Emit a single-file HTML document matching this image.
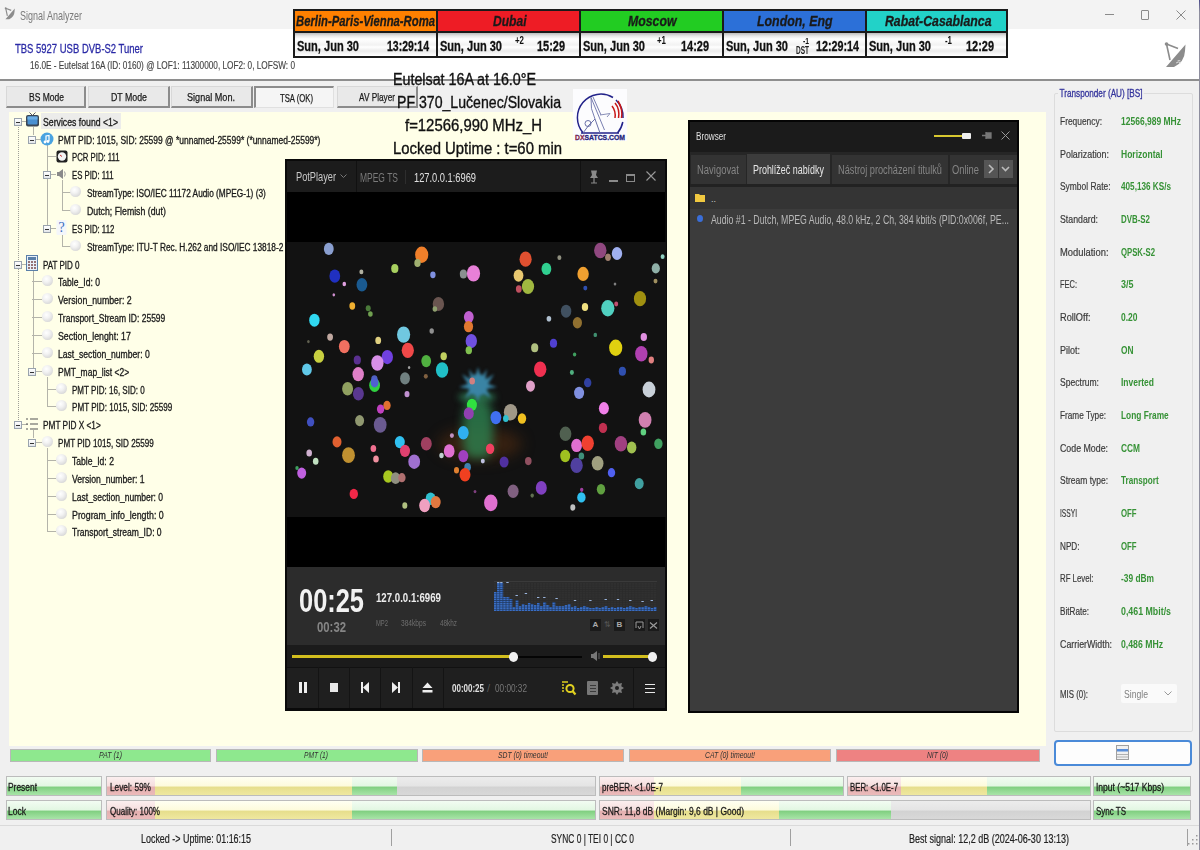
<!DOCTYPE html>
<html><head><meta charset="utf-8">
<style>
*{box-sizing:border-box;margin:0;padding:0}
html,body{width:1200px;height:850px;overflow:hidden;background:#f0f0f0;font-family:"Liberation Sans",sans-serif;position:relative}
.a{position:absolute;white-space:nowrap}
.f{position:absolute;white-space:nowrap;transform-origin:0 0}
.clk{position:absolute;top:9px;height:49px;background:#1a1a1a}
.ch{position:absolute;left:2px;right:0;top:2px;height:20px}
.ct{position:absolute;left:2px;right:0;top:24px;height:23px;background:linear-gradient(#bdbdbd 0,#e8e8e8 3px,#fff 6px,#f2f2f2 12px,#fff 14px,#eaeaea 18px,#fff 23px)}
.ctx{font:bold 14px "Liberation Sans",sans-serif;color:#111;margin-top:1px;-webkit-text-stroke:0.3px #111}
.chx{font:italic bold 15px "Liberation Sans",sans-serif;color:#1a1a1a;-webkit-text-stroke:0.3px #1a1a1a}
.tab{position:absolute;top:86px;height:22px;background:#e9e9e9;border-top:1px solid #d8d8d8;border-left:1px solid #d8d8d8;border-bottom:2px solid #8c8c8c;border-right:2px solid #8c8c8c}
.tt{font-size:11px;color:#1a1a1a;-webkit-text-stroke:0.25px #1a1a1a}
.tr{font-size:10px;color:#1a1a1a;-webkit-text-stroke:0.3px #1a1a1a}
.sph{position:absolute;width:11px;height:11px;border-radius:50%;background:radial-gradient(circle at 40% 35%,#fff 0,#f2f2f2 35%,#c9c9c9 100%)}
.bx{position:absolute;width:8px;height:8px;border:1px solid #9aa3ad;background:linear-gradient(#fff,#e3e6ea)}
.bx:after{content:"";position:absolute;left:1px;top:3px;width:4px;height:1px;background:#333}
.vl{position:absolute;width:1px;background:#b4b4aa}
.hl{position:absolute;height:1px;background:#b4b4aa}
.lab{font-size:11px;color:#3a3a3a;-webkit-text-stroke:0.2px #3a3a3a}
.val{font-weight:bold;font-size:11px;color:#369236}
.sb{position:absolute;top:749px;height:13px;border:1px solid #b8b8b8}
.sbt{font:italic 9px "Liberation Sans",sans-serif;color:#333}
.pb{position:absolute;height:20px;border:1px solid #bcbcbc;background:#e6e6e6;overflow:hidden}
.pb i{position:absolute;top:0;bottom:0}
.pbt{font-size:11px;color:#1a1a1a;-webkit-text-stroke:0.3px #1a1a1a}
.g{background:linear-gradient(#f2fcf2 0,#e2f7e2 50%,#80cf80 56%,#98dc98 82%,#a8e4a8 100%)}
.y{background:linear-gradient(#fffff2 0,#fdfbdc 50%,#e6de8c 56%,#efe8a0 100%)}
.r{background:linear-gradient(#fbefef 0,#f6dede 50%,#e4b0b0 56%,#ebbaba 100%)}
.gr{background:linear-gradient(#ececec 0,#e4e4e4 50%,#d2d2d2 56%,#d8d8d8 100%)}
.dot{position:absolute;border-radius:50%}
</style></head><body>
<!-- title bar -->
<div class="a" style="left:0;top:0;width:1200px;height:29px;background:#f3f3f3"></div>
<svg class="a" style="left:4px;top:6px" width="12" height="15" viewBox="0 0 25 28"><circle cx="3.5" cy="3" r="2" fill="#8c8c8c"></circle><path d="M3.5 3 L15 7.5 M3.5 3 L7 19" stroke="#8c8c8c" stroke-width="2.4" fill="none"></path><path d="M22.5 3.5 L3 26 L11 26 Q21.5 21 22 10 Z" fill="#8c8c8c"></path></svg>
<div class="f" style="left: 20px; top: 8px; font-size: 13px; color: rgb(122, 122, 122); transform: scaleX(0.691771);">Signal Analyzer</div>
<div class="a" style="left:1105px;top:14px;width:9px;height:1px;background:#8a8a8a"></div>
<div class="a" style="left:1141px;top:10px;width:8px;height:10px;border:1px solid #8a8a8a;border-radius:1px"></div>
<svg class="a" style="left:1176px;top:10px" width="10" height="10" viewBox="0 0 10 10"><path d="M0.5 0.5 L9.5 9.5 M9.5 0.5 L0.5 9.5" stroke="#8a8a8a" stroke-width="1"></path></svg>
<!-- header -->
<div class="a" style="left:0;top:29px;width:1200px;height:50px;background:#fff"></div>
<div class="a" style="left:0;top:79px;width:1200px;height:2px;background:#8e8e8e"></div>
<div class="f" style="left: 15px; top: 41px; font-size: 13px; color: rgb(42, 42, 166); -webkit-text-stroke: 0.3px rgb(42, 42, 166); transform: scaleX(0.728955);">TBS 5927 USB DVB-S2 Tuner</div>
<div class="f" style="left: 30px; top: 59px; font-size: 11px; color: rgb(68, 68, 68); -webkit-text-stroke: 0.15px rgb(68, 68, 68); transform: scaleX(0.747762);">16.0E - Eutelsat 16A (ID: 0160) @ LOF1: 11300000, LOF2: 0, LOFSW: 0</div>
<!-- sat icon right -->
<svg class="a" style="left:1163px;top:41px" width="25" height="28" viewBox="0 0 25 28"><circle cx="3.5" cy="3" r="1.8" fill="#8c8c8c"></circle><path d="M3.5 3 L15 7.5 M3.5 3 L7 19" stroke="#8c8c8c" stroke-width="1.6" fill="none"></path><path d="M22.5 3.5 L3 26 L11 26 Q21.5 21 22 10 Z" fill="#8c8c8c"></path><path d="M13 22 q2.5 -2 5 0 M14.5 20 q1.5 -1 3 0" stroke="#dcdcdc" stroke-width="0.9" fill="none"></path></svg>
<!-- clocks -->
<div class="clk" style="left:293px;width:145px">
 <div class="ch" style="background:#ff8000"><div class="f chx" style="left: 1px; top: 1px; transform: scaleX(0.753388);">Berlin-Paris-Vienna-Roma</div></div>
 <div class="ct"><div class="f ctx" style="left: 2px; top: 4px; transform: scaleX(0.789024);">Sun, Jun 30</div><div class="f ctx" style="left: 92px; top: 4px; transform: scaleX(0.749373);">13:29:14</div></div>
</div>
<div class="clk" style="left:436px;width:145px">
 <div class="ch" style="background:#ee1c25"><div class="f chx" style="left: 54.5px; top: 1px; transform: scaleX(0.8039);">Dubai</div></div>
 <div class="ct"><div class="f ctx" style="left: 2px; top: 4px; transform: scaleX(0.789024);">Sun, Jun 30</div><div class="f" style="left: 77px; top: 2px; font: bold 10px &quot;Liberation Sans&quot;; color: rgb(17, 17, 17); transform: scaleX(0.789041);">+2</div><div class="f ctx" style="left: 99px; top: 4px; transform: scaleX(0.78185);">15:29</div></div>
</div>
<div class="clk" style="left:579px;width:145px">
 <div class="ch" style="background:#22cc22"><div class="f chx" style="left: 46.5px; top: 1px; transform: scaleX(0.81943);">Moscow</div></div>
 <div class="ct"><div class="f ctx" style="left: 2px; top: 4px; transform: scaleX(0.789024);">Sun, Jun 30</div><div class="f" style="left: 76px; top: 2px; font: bold 10px &quot;Liberation Sans&quot;; color: rgb(17, 17, 17); transform: scaleX(0.789041);">+1</div><div class="f ctx" style="left: 100px; top: 4px; transform: scaleX(0.78185);">14:29</div></div>
</div>
<div class="clk" style="left:722px;width:145px">
 <div class="ch" style="background:#2c70d8"><div class="f chx" style="left: 33px; top: 1px; transform: scaleX(0.82387);">London, Eng</div></div>
 <div class="ct"><div class="f ctx" style="left: 2px; top: 4px; transform: scaleX(0.789024);">Sun, Jun 30</div><div class="f" style="left: 79px; top: 3px; font: bold 9px &quot;Liberation Sans&quot;; color: rgb(17, 17, 17); transform: scaleX(0.748538);">-1</div><div class="f" style="left: 72px; top: 12px; font: bold 10px &quot;Liberation Sans&quot;; color: rgb(34, 34, 34); transform: scaleX(0.65);">DST</div><div class="f ctx" style="left: 92px; top: 4px; transform: scaleX(0.767215);">12:29:14</div></div>
</div>
<div class="clk" style="left:865px;width:143px">
 <div class="ch" style="background:#22d2c8;right:2px"><div class="f chx" style="left: 17.5px; top: 1px; transform: scaleX(0.818837);">Rabat-Casablanca</div></div>
 <div class="ct" style="right:2px"><div class="f ctx" style="left: 2px; top: 4px; transform: scaleX(0.789024);">Sun, Jun 30</div><div class="f" style="left: 78px; top: 2px; font: bold 10px &quot;Liberation Sans&quot;; color: rgb(17, 17, 17); transform: scaleX(0.785965);">-1</div><div class="f ctx" style="left: 99px; top: 4px; transform: scaleX(0.78185);">12:29</div></div>
</div>

<!-- tabs -->
<div class="tab" style="left:6px;width:80px"></div>
<div class="tab" style="left:88px;width:82px"></div>
<div class="tab" style="left:171px;width:82px"></div>
<div class="a" style="left:254px;top:86px;width:80px;height:22px;background:#f5f5f5;border-top:2px solid #8c8c8c;border-left:2px solid #8c8c8c;border-right:1px solid #e0e0e0;border-bottom:1px solid #e0e0e0"></div>
<div class="tab" style="left:337px;width:81px"></div>
<div class="f tt" style="left: 29px; top: 91px; transform: scaleX(0.773481);">BS Mode</div>
<div class="f tt" style="left: 111px; top: 91px; transform: scaleX(0.799168);">DT Mode</div>
<div class="f tt" style="left: 187px; top: 91px; transform: scaleX(0.826251);">Signal Mon.</div>
<div class="f tt" style="left: 280px; top: 92px; transform: scaleX(0.701195);">TSA (OK)</div>
<div class="f tt" style="left: 359px; top: 91px; transform: scaleX(0.748538);">AV Player</div>

<!-- yellow tree panel -->
<div class="a" style="left:9px;top:112px;width:1037px;height:634px;background:#ffffe8"></div>
<div class="a" style="left:41px;top:113px;width:80px;height:16px;background:#ececea"></div>
<div class="a" style="left:18px;top:127px;width:1px;height:297px;background:repeating-linear-gradient(#a0a098 0 1px,transparent 1px 2px)"></div>
<div class="vl" style="left:33px;top:127px;height:8px"></div>
<div class="vl" style="left:47px;top:145px;height:83px"></div>
<div class="vl" style="left:62px;top:180px;height:30px"></div>
<div class="vl" style="left:62px;top:234px;height:12px"></div>
<div class="vl" style="left:33px;top:270px;height:101px"></div>
<div class="vl" style="left:47px;top:377px;height:29px"></div>
<div class="vl" style="left:33px;top:430px;height:8px"></div>
<div class="vl" style="left:47px;top:448px;height:83px"></div>
<div class="bx" style="left:14px;top:118px"></div>
<div class="hl" style="left:22px;top:121px;width:6px"></div>
<svg class="a" style="left:26px;top:112px" width="13" height="15" viewBox="0 0 13 15"><path d="M3.5 0.5 L6.5 3.5 L9.5 0.5" stroke="#556" stroke-width="1" fill="none"></path><rect x="0" y="3" width="13" height="11.5" rx="2" fill="#3b4654"></rect><rect x="1.5" y="4.5" width="10" height="8" rx="1" fill="#4a90d0"></rect><rect x="1.5" y="4.5" width="10" height="3" fill="#6aaee6"></rect></svg>
<div class="f tr" style="left: 43px; top: 116.5px; transform: scaleX(0.870354);">Services found &lt;1&gt;</div>
<div class="bx" style="left:28px;top:136px"></div>
<div class="hl" style="left:36px;top:139px;width:6px"></div>
<svg class="a" style="left:40px;top:132px" width="14" height="14" viewBox="0 0 14 14"><circle cx="7" cy="7" r="6.5" fill="#4aa3e0"></circle><path d="M6 10 V4 L9 3.5 V9" stroke="#fff" stroke-width="1.2" fill="none"></path><circle cx="5" cy="10" r="1.4" fill="#fff"></circle><circle cx="8" cy="9.5" r="1.4" fill="#fff"></circle></svg>
<div class="f tr" style="left: 57.5px; top: 134.5px; transform: scaleX(0.846025);">PMT PID: 1015, SID: 25599 @ *unnamed-25599* (*unnamed-25599*)</div>
<div class="hl" style="left:47px;top:156px;width:9px"></div>
<svg class="a" style="left:56px;top:150px" width="12" height="13" viewBox="0 0 12 13"><rect x="0.5" y="0.5" width="11" height="12" rx="2" fill="#222"></rect><circle cx="6" cy="6.5" r="4.2" fill="#f4f4f4"></circle><path d="M6 6.5 L4 5" stroke="#c33" stroke-width="1"></path></svg>
<div class="f tr" style="left: 72px; top: 151.5px; transform: scaleX(0.776153);">PCR PID: 111</div>
<div class="bx" style="left:43px;top:171px"></div>
<div class="hl" style="left:51px;top:174px;width:5px"></div>
<svg class="a" style="left:56px;top:168px" width="11" height="12" viewBox="0 0 11 12"><path d="M1 4 H3 L7 1 V11 L3 8 H1 Z" fill="#8a8a8a"></path><path d="M8.5 3.5 q1.5 2.5 0 5" stroke="#9a9a9a" stroke-width="1" fill="none"></path></svg>
<div class="f tr" style="left: 72px; top: 169.5px; transform: scaleX(0.776889);">ES PID: 111</div>
<div class="hl" style="left:62px;top:192px;width:9px"></div>
<div class="sph" style="left:70px;top:186px"></div>
<div class="f tr" style="left: 86.5px; top: 187.5px; transform: scaleX(0.828437);">StreamType: ISO/IEC 11172 Audio (MPEG-1) (3)</div>
<div class="hl" style="left:62px;top:210px;width:9px"></div>
<div class="sph" style="left:70px;top:204px"></div>
<div class="f tr" style="left: 86.5px; top: 205.5px; transform: scaleX(0.875252);">Dutch; Flemish (dut)</div>
<div class="bx" style="left:43px;top:225px"></div>
<div class="hl" style="left:51px;top:228px;width:5px"></div>
<svg class="a" style="left:56px;top:219px" width="11" height="17" viewBox="0 0 11 17"><rect x="0.5" y="1" width="10" height="15" rx="1" fill="#f4f6fa"></rect><text x="5.5" y="13" font-size="14" font-family="Liberation Serif" text-anchor="middle" fill="#3a6cc0">?</text></svg>
<div class="f tr" style="left: 72px; top: 223.5px; transform: scaleX(0.77905);">ES PID: 112</div>
<div class="hl" style="left:62px;top:246px;width:9px"></div>
<div class="sph" style="left:70px;top:240px"></div>
<div class="f tr" style="left: 86.5px; top: 241.5px; transform: scaleX(0.831975);">StreamType: ITU-T Rec. H.262 and ISO/IEC 13818-2 t</div>
<div class="bx" style="left:14px;top:261px"></div>
<div class="hl" style="left:22px;top:264px;width:6px"></div>
<svg class="a" style="left:26px;top:255px" width="12" height="16" viewBox="0 0 12 16"><rect x="0.5" y="0.5" width="11" height="15" fill="#e8f0f8" stroke="#5a7fa8"></rect><rect x="2" y="2" width="8" height="3" fill="#5a7fa8"></rect><path d="M2 7h2M5 7h2M8 7h2M2 10h2M5 10h2M8 10h2M2 13h2M5 13h2M8 13h2" stroke="#7a4a4a" stroke-width="1.5"></path></svg>
<div class="f tr" style="left: 43px; top: 259.5px; transform: scaleX(0.800823);">PAT PID 0</div>
<div class="hl" style="left:32px;top:281px;width:10px"></div>
<div class="sph" style="left:42px;top:275px"></div>
<div class="f tr" style="left: 57.5px; top: 276.5px; transform: scaleX(0.858238);">Table_Id: 0</div>
<div class="hl" style="left:32px;top:299px;width:10px"></div>
<div class="sph" style="left:42px;top:293px"></div>
<div class="f tr" style="left: 57.5px; top: 294.5px; transform: scaleX(0.877871);">Version_number: 2</div>
<div class="hl" style="left:32px;top:317px;width:10px"></div>
<div class="sph" style="left:42px;top:311px"></div>
<div class="f tr" style="left: 57.5px; top: 312.5px; transform: scaleX(0.849165);">Transport_Stream ID: 25599</div>
<div class="hl" style="left:32px;top:335px;width:10px"></div>
<div class="sph" style="left:42px;top:329px"></div>
<div class="f tr" style="left: 57.5px; top: 330.5px; transform: scaleX(0.878763);">Section_lenght: 17</div>
<div class="hl" style="left:32px;top:353px;width:10px"></div>
<div class="sph" style="left:42px;top:347px"></div>
<div class="f tr" style="left: 57.5px; top: 348.5px; transform: scaleX(0.859142);">Last_section_number: 0</div>
<div class="bx" style="left:28px;top:368px"></div>
<div class="hl" style="left:36px;top:371px;width:6px"></div>
<div class="sph" style="left:42px;top:365px"></div>
<div class="f tr" style="left: 57.5px; top: 366.5px; transform: scaleX(0.84825);">PMT_map_list &lt;2&gt;</div>
<div class="hl" style="left:47px;top:389px;width:9px"></div>
<div class="sph" style="left:56px;top:383px"></div>
<div class="f tr" style="left: 72px; top: 384.5px; transform: scaleX(0.804148);">PMT PID: 16, SID: 0</div>
<div class="hl" style="left:47px;top:406px;width:9px"></div>
<div class="sph" style="left:56px;top:400px"></div>
<div class="f tr" style="left: 72px; top: 401.5px; transform: scaleX(0.8103);">PMT PID: 1015, SID: 25599</div>
<div class="bx" style="left:14px;top:421px"></div>
<div class="hl" style="left:22px;top:424px;width:6px"></div>
<svg class="a" style="left:26px;top:417px" width="12" height="14" viewBox="0 0 12 14"><path d="M0 2h2M4 2h8M0 7h2M4 7h8M0 12h2M4 12h8" stroke="#555" stroke-width="1.2"></path></svg>
<div class="f tr" style="left: 43px; top: 419.5px; transform: scaleX(0.827562);">PMT PID X &lt;1&gt;</div>
<div class="bx" style="left:28px;top:439px"></div>
<div class="hl" style="left:36px;top:442px;width:6px"></div>
<div class="sph" style="left:42px;top:436px"></div>
<div class="f tr" style="left: 57.5px; top: 437.5px; transform: scaleX(0.809516);">PMT PID 1015, SID 25599</div>
<div class="hl" style="left:47px;top:460px;width:9px"></div>
<div class="sph" style="left:56px;top:454px"></div>
<div class="f tr" style="left: 72px; top: 455.5px; transform: scaleX(0.856194);">Table_Id: 2</div>
<div class="hl" style="left:47px;top:478px;width:9px"></div>
<div class="sph" style="left:56px;top:472px"></div>
<div class="f tr" style="left: 72px; top: 473.5px; transform: scaleX(0.865959);">Version_number: 1</div>
<div class="hl" style="left:47px;top:496px;width:9px"></div>
<div class="sph" style="left:56px;top:490px"></div>
<div class="f tr" style="left: 72px; top: 491.5px; transform: scaleX(0.853521);">Last_section_number: 0</div>
<div class="hl" style="left:47px;top:514px;width:9px"></div>
<div class="sph" style="left:56px;top:508px"></div>
<div class="f tr" style="left: 72px; top: 509.5px; transform: scaleX(0.881996);">Program_info_length: 0</div>
<div class="hl" style="left:47px;top:531px;width:9px"></div>
<div class="sph" style="left:56px;top:525px"></div>
<div class="f tr" style="left: 72px; top: 526.5px; transform: scaleX(0.851433);">Transport_stream_ID: 0</div>

<!-- potplayer window -->
<div class="a" style="left:285px;top:159px;width:382px;height:552px;background:#0a0a0a"></div>
<div class="a" style="left:287px;top:161px;width:378px;height:31px;background:#1c1c1c"></div>
<div class="a" style="left:356px;top:161px;width:1px;height:31px;background:#111"></div>
<div class="a" style="left:405px;top:170px;width:1px;height:14px;background:#2e2e2e"></div>
<div class="a" style="left:580px;top:161px;width:1px;height:31px;background:#111"></div>
<div class="f" style="left: 296px; top: 170px; font-size: 12px; color: rgb(200, 200, 200); transform: scaleX(0.768769);">PotPlayer</div>
<svg class="a" style="left:340px;top:174px" width="7" height="5" viewBox="0 0 7 5"><path d="M0.5 0.5 L3.5 3.5 L6.5 0.5" stroke="#777" fill="none"></path></svg>
<div class="f" style="left: 360px; top: 171px; font-size: 12px; color: rgb(122, 122, 122); transform: scaleX(0.706361);">MPEG TS</div>
<div class="f" style="left: 414px; top: 171px; font-size: 12px; color: rgb(224, 224, 224); transform: scaleX(0.774244);">127.0.0.1:6969</div>
<svg class="a" style="left:589px;top:170px" width="10" height="14" viewBox="0 0 10 14"><path d="M2 0.5 H8 L7 5 L9 8 H1 L3 5 Z" fill="#8a8a8a"></path><path d="M5 8 V13 M2 13 H8" stroke="#8a8a8a" stroke-width="1.2"></path></svg>
<div class="a" style="left:609px;top:180px;width:9px;height:2px;background:#8a8a8a"></div>
<div class="a" style="left:626px;top:174px;width:9px;height:8px;border:1px solid #8a8a8a;border-top-width:2px"></div>
<svg class="a" style="left:646px;top:171px" width="10" height="10" viewBox="0 0 10 10"><path d="M0.5 0.5 L9.5 9.5 M9.5 0.5 L0.5 9.5" stroke="#9a9a9a" stroke-width="1.1"></path></svg>
<div class="a" style="left:287px;top:192px;width:378px;height:50px;background:#000"></div>
<div class="a" style="left:287px;top:242px;width:379px;height:275px;background:#121212"></div>
<!-- tree glow -->
<div class="a" style="left:438px;top:428px;width:84px;height:32px;border-radius:50%;background:rgba(110,55,15,0.4);filter:blur(7px)"></div>
<div class="a" style="left:463px;top:398px;width:30px;height:60px;border-radius:40% 40% 30% 30%;background:rgba(45,130,80,0.8);filter:blur(5px)"></div>
<div class="a" style="left:458px;top:392px;width:38px;height:10px;border-radius:50%;background:rgba(50,140,95,0.7);filter:blur(3px)"></div>
<svg class="a" style="left:455px;top:364px;filter:blur(1.6px)" width="46" height="40" viewBox="0 0 46 40"><g fill="#3a84a4"><ellipse cx="23" cy="21" rx="10" ry="11"></ellipse><path d="M23 3 L26 14 L32 5 L30 16 L39 10 L33 20 L42 23 L31 25 L36 34 L25 28 L23 38 L20 28 L10 34 L15 25 L4 23 L13 20 L7 10 L16 16 L14 5 L20 14 Z"></path></g></svg>
<svg class="a" style="left:0;top:0" width="1200" height="850" viewBox="0 0 1200 850">
<ellipse cx="328.8" cy="248.9" rx="4.9" ry="6.1" fill="#8a9fd0"></ellipse>
<ellipse cx="421.7" cy="254.7" rx="6.6" ry="8.2" fill="#f07f2a"></ellipse>
<ellipse cx="417.5" cy="263" rx="3.2" ry="4.0" fill="#a0b070"></ellipse>
<ellipse cx="394.8" cy="268.4" rx="3.6" ry="4.5" fill="#a8d060"></ellipse>
<ellipse cx="432.9" cy="274.8" rx="2.7" ry="3.4" fill="#8090e0"></ellipse>
<ellipse cx="463.4" cy="273.9" rx="3.6" ry="4.5" fill="#8a9090"></ellipse>
<ellipse cx="473.5" cy="273.4" rx="6.6" ry="8.2" fill="#e880d8"></ellipse>
<ellipse cx="334.8" cy="276.1" rx="5.4" ry="6.7" fill="#2030c0"></ellipse>
<ellipse cx="361.4" cy="271.9" rx="2.0" ry="2.4" fill="#b0b0a0"></ellipse>
<ellipse cx="344.3" cy="284" rx="1.8" ry="2.2" fill="#e0a0e0"></ellipse>
<ellipse cx="361.9" cy="284.8" rx="5.4" ry="6.7" fill="#1a5a90"></ellipse>
<ellipse cx="333.8" cy="294.8" rx="1.3" ry="1.6" fill="#d090d0"></ellipse>
<ellipse cx="352.3" cy="306" rx="2.9" ry="3.7" fill="#f0b030"></ellipse>
<ellipse cx="368.2" cy="308.2" rx="2.5" ry="3.0" fill="#4a7a3a"></ellipse>
<ellipse cx="370.4" cy="314" rx="2.3" ry="2.8" fill="#70a050"></ellipse>
<ellipse cx="438.4" cy="304" rx="5.7" ry="7.1" fill="#6a5550"></ellipse>
<ellipse cx="434.9" cy="309" rx="2.3" ry="2.8" fill="#90a070"></ellipse>
<ellipse cx="314.4" cy="320.2" rx="5.2" ry="6.5" fill="#30d8f0"></ellipse>
<ellipse cx="468.8" cy="317" rx="4.9" ry="6.1" fill="#c060d0"></ellipse>
<ellipse cx="468.5" cy="326.6" rx="4.6" ry="5.7" fill="#e07830"></ellipse>
<ellipse cx="471.3" cy="341.1" rx="5.7" ry="7.1" fill="#7050e0"></ellipse>
<ellipse cx="468.8" cy="350.3" rx="3.2" ry="4.0" fill="#80c050"></ellipse>
<ellipse cx="330.1" cy="337.1" rx="2.9" ry="3.7" fill="#c0a8a0"></ellipse>
<ellipse cx="308.4" cy="341.6" rx="1.3" ry="1.6" fill="#606050"></ellipse>
<ellipse cx="344.3" cy="346.6" rx="5.4" ry="6.7" fill="#f07060"></ellipse>
<ellipse cx="378.2" cy="340.4" rx="2.9" ry="3.7" fill="#e0d080"></ellipse>
<ellipse cx="403.6" cy="334.6" rx="6.6" ry="8.2" fill="#70c8e0"></ellipse>
<ellipse cx="431.7" cy="331" rx="2.2" ry="2.7" fill="#909090"></ellipse>
<ellipse cx="407.8" cy="350.3" rx="6.1" ry="7.6" fill="#f04848"></ellipse>
<ellipse cx="318.9" cy="356.3" rx="5.2" ry="6.5" fill="#c8d040"></ellipse>
<ellipse cx="357.3" cy="360" rx="3.6" ry="4.5" fill="#5a3090"></ellipse>
<ellipse cx="387.3" cy="357.1" rx="5.7" ry="7.1" fill="#7040e0"></ellipse>
<ellipse cx="377.4" cy="363" rx="6.2" ry="7.7" fill="#d890e8"></ellipse>
<ellipse cx="426.2" cy="361.1" rx="4.9" ry="6.1" fill="#50b040"></ellipse>
<ellipse cx="443.7" cy="356.3" rx="3.2" ry="4.0" fill="#c0d060"></ellipse>
<ellipse cx="442.1" cy="370" rx="6.2" ry="7.7" fill="#20c0c8"></ellipse>
<ellipse cx="306.9" cy="369.5" rx="4.9" ry="6.1" fill="#60c8e8"></ellipse>
<ellipse cx="358.2" cy="374.2" rx="5.7" ry="7.1" fill="#e080c8"></ellipse>
<ellipse cx="405" cy="378.4" rx="4.9" ry="6.1" fill="#708080"></ellipse>
<ellipse cx="409.1" cy="367.5" rx="1.2" ry="1.5" fill="#a0a0a0"></ellipse>
<ellipse cx="425.8" cy="376.3" rx="2.0" ry="2.4" fill="#806040"></ellipse>
<ellipse cx="374.4" cy="379.2" rx="3.2" ry="4.0" fill="#5060c0"></ellipse>
<ellipse cx="600.3" cy="250.5" rx="6.2" ry="7.7" fill="#904880"></ellipse>
<ellipse cx="608" cy="257.2" rx="2.9" ry="3.7" fill="#a08070"></ellipse>
<ellipse cx="617" cy="253.5" rx="5.2" ry="6.5" fill="#a0b0f0"></ellipse>
<ellipse cx="662.6" cy="256.7" rx="2.0" ry="2.4" fill="#90d0c0"></ellipse>
<ellipse cx="655.8" cy="268.4" rx="4.1" ry="5.1" fill="#90b0a8"></ellipse>
<ellipse cx="655.5" cy="281.1" rx="2.0" ry="2.4" fill="#a09060"></ellipse>
<ellipse cx="525.6" cy="259.2" rx="6.1" ry="7.6" fill="#e05030"></ellipse>
<ellipse cx="559.4" cy="257.7" rx="2.0" ry="2.4" fill="#909080"></ellipse>
<ellipse cx="546.4" cy="268.9" rx="4.9" ry="6.1" fill="#30d090"></ellipse>
<ellipse cx="518.5" cy="275.6" rx="4.9" ry="6.1" fill="#e8c870"></ellipse>
<ellipse cx="528" cy="286.5" rx="6.1" ry="7.6" fill="#a0b840"></ellipse>
<ellipse cx="518.8" cy="289" rx="2.9" ry="3.7" fill="#c05060"></ellipse>
<ellipse cx="583.1" cy="273.9" rx="5.7" ry="7.1" fill="#f0a030"></ellipse>
<ellipse cx="585.3" cy="288.1" rx="2.0" ry="2.4" fill="#3050b0"></ellipse>
<ellipse cx="615" cy="284" rx="1.3" ry="1.6" fill="#808080"></ellipse>
<ellipse cx="640" cy="298.7" rx="6.1" ry="7.6" fill="#a09010"></ellipse>
<ellipse cx="607.8" cy="308.2" rx="6.6" ry="8.2" fill="#50d0c0"></ellipse>
<ellipse cx="616.2" cy="304" rx="2.0" ry="2.4" fill="#c05070"></ellipse>
<ellipse cx="585" cy="307" rx="3.2" ry="4.0" fill="#f0e080"></ellipse>
<ellipse cx="566.1" cy="311.2" rx="5.2" ry="6.5" fill="#405060"></ellipse>
<ellipse cx="548.9" cy="318.7" rx="2.3" ry="2.8" fill="#b0c0d0"></ellipse>
<ellipse cx="577.4" cy="322.7" rx="4.6" ry="5.7" fill="#907030"></ellipse>
<ellipse cx="595.3" cy="334.9" rx="1.8" ry="2.2" fill="#409070"></ellipse>
<ellipse cx="643.8" cy="337.1" rx="3.2" ry="4.0" fill="#e090e0"></ellipse>
<ellipse cx="615.7" cy="347.8" rx="6.6" ry="8.2" fill="#e0d010"></ellipse>
<ellipse cx="641.3" cy="353.8" rx="6.2" ry="7.7" fill="#b040b0"></ellipse>
<ellipse cx="651.3" cy="360" rx="2.7" ry="3.4" fill="#e08080"></ellipse>
<ellipse cx="553.5" cy="343.3" rx="3.6" ry="4.5" fill="#5040d0"></ellipse>
<ellipse cx="534.7" cy="347.8" rx="3.6" ry="4.5" fill="#b0c080"></ellipse>
<ellipse cx="574.6" cy="354.5" rx="1.7" ry="2.1" fill="#40a060"></ellipse>
<ellipse cx="540.2" cy="369.2" rx="6.2" ry="7.7" fill="#f03050"></ellipse>
<ellipse cx="571.9" cy="372.5" rx="2.0" ry="2.4" fill="#50b080"></ellipse>
<ellipse cx="622.4" cy="371.2" rx="3.6" ry="4.5" fill="#3050b0"></ellipse>
<ellipse cx="374.6" cy="385.2" rx="5.4" ry="6.7" fill="#30d040"></ellipse>
<ellipse cx="374.6" cy="382.5" rx="3.9" ry="4.9" fill="#5060d0"></ellipse>
<ellipse cx="347.6" cy="388.7" rx="5.5" ry="6.8" fill="#90a060"></ellipse>
<ellipse cx="358.4" cy="393.8" rx="5.5" ry="6.8" fill="#5a3890"></ellipse>
<ellipse cx="407" cy="394.1" rx="2.5" ry="3.2" fill="#c090d0"></ellipse>
<ellipse cx="387" cy="405.4" rx="3.7" ry="4.6" fill="#e07030"></ellipse>
<ellipse cx="380.6" cy="409.1" rx="3.7" ry="4.6" fill="#c040c0"></ellipse>
<ellipse cx="359.6" cy="420.6" rx="4.5" ry="5.6" fill="#909870"></ellipse>
<ellipse cx="380.2" cy="424.8" rx="6.4" ry="7.9" fill="#6a5a90"></ellipse>
<ellipse cx="310.6" cy="421.9" rx="3.7" ry="4.6" fill="#4050c0"></ellipse>
<ellipse cx="337" cy="441.9" rx="4.5" ry="5.6" fill="#e06030"></ellipse>
<ellipse cx="348.5" cy="455.2" rx="6.4" ry="7.9" fill="#c09030"></ellipse>
<ellipse cx="309.2" cy="453" rx="2.8" ry="3.5" fill="#d0b0d0"></ellipse>
<ellipse cx="315.7" cy="461.2" rx="2.8" ry="3.5" fill="#c0e0c0"></ellipse>
<ellipse cx="301.7" cy="473.1" rx="4.5" ry="5.6" fill="#c060e0"></ellipse>
<ellipse cx="373.4" cy="448.4" rx="2.8" ry="3.5" fill="#f07090"></ellipse>
<ellipse cx="376" cy="459.1" rx="2.8" ry="3.5" fill="#f090a0"></ellipse>
<ellipse cx="399.8" cy="442.1" rx="5.0" ry="6.2" fill="#30c0f0"></ellipse>
<ellipse cx="405" cy="450.9" rx="5.0" ry="6.2" fill="#e04070"></ellipse>
<ellipse cx="414.2" cy="461.7" rx="5.9" ry="7.3" fill="#a070d0"></ellipse>
<ellipse cx="426.3" cy="443.8" rx="5.5" ry="6.8" fill="#a04060"></ellipse>
<ellipse cx="388.2" cy="476.5" rx="5.0" ry="6.2" fill="#a8c820"></ellipse>
<ellipse cx="395.6" cy="478.2" rx="4.7" ry="5.9" fill="#909080"></ellipse>
<ellipse cx="401.9" cy="477.7" rx="3.7" ry="4.6" fill="#b07070"></ellipse>
<ellipse cx="353.8" cy="493.9" rx="4.2" ry="5.2" fill="#f02848"></ellipse>
<ellipse cx="404.8" cy="505.5" rx="2.5" ry="3.2" fill="#b0c080"></ellipse>
<ellipse cx="430.6" cy="498.7" rx="5.0" ry="6.2" fill="#30c0d0"></ellipse>
<ellipse cx="435.7" cy="502.1" rx="5.0" ry="6.2" fill="#e07840"></ellipse>
<ellipse cx="424.6" cy="505.5" rx="5.4" ry="6.7" fill="#f0a0c0"></ellipse>
<ellipse cx="449.2" cy="450.9" rx="5.4" ry="6.7" fill="#e070d0"></ellipse>
<ellipse cx="441.5" cy="455.5" rx="2.2" ry="2.7" fill="#c0d0d0"></ellipse>
<ellipse cx="451.9" cy="435.6" rx="2.0" ry="2.4" fill="#c090c0"></ellipse>
<ellipse cx="463.3" cy="432.7" rx="5.4" ry="6.7" fill="#30b0f0"></ellipse>
<ellipse cx="463.3" cy="456.1" rx="5.0" ry="6.2" fill="#a040c0"></ellipse>
<ellipse cx="471.9" cy="404.9" rx="5.0" ry="6.2" fill="#30e040"></ellipse>
<ellipse cx="468.8" cy="413.4" rx="5.0" ry="6.2" fill="#9040b0"></ellipse>
<ellipse cx="456.5" cy="470.2" rx="2.5" ry="3.2" fill="#e08030"></ellipse>
<ellipse cx="467.6" cy="467.2" rx="3.3" ry="4.1" fill="#4080b0"></ellipse>
<ellipse cx="465" cy="474.8" rx="5.5" ry="6.8" fill="#f04020"></ellipse>
<ellipse cx="472.2" cy="381" rx="2.8" ry="3.5" fill="#d08080"></ellipse>
<ellipse cx="475" cy="491.6" rx="1.4" ry="1.7" fill="#804080"></ellipse>
<ellipse cx="297" cy="468" rx="1.7" ry="2.1" fill="#40a060"></ellipse>
<ellipse cx="649" cy="389.5" rx="6.4" ry="7.9" fill="#c8d0d8"></ellipse>
<ellipse cx="530.5" cy="386.1" rx="4.5" ry="5.6" fill="#e0a0c8"></ellipse>
<ellipse cx="587.7" cy="382.7" rx="3.7" ry="4.6" fill="#3040a0"></ellipse>
<ellipse cx="579.1" cy="392.9" rx="5.0" ry="6.2" fill="#8090e0"></ellipse>
<ellipse cx="603.9" cy="408.3" rx="5.0" ry="6.2" fill="#f080e8"></ellipse>
<ellipse cx="645.1" cy="419.9" rx="6.4" ry="7.9" fill="#d080b0"></ellipse>
<ellipse cx="603" cy="427.9" rx="4.2" ry="5.2" fill="#c03050"></ellipse>
<ellipse cx="643.4" cy="432.1" rx="2.8" ry="3.5" fill="#60d080"></ellipse>
<ellipse cx="658.4" cy="443.7" rx="4.2" ry="5.2" fill="#40a060"></ellipse>
<ellipse cx="510.6" cy="412.2" rx="6.7" ry="8.3" fill="#a09888"></ellipse>
<ellipse cx="495.9" cy="417.6" rx="5.4" ry="6.7" fill="#4070f0"></ellipse>
<ellipse cx="522" cy="418.5" rx="4.2" ry="5.2" fill="#f0c020"></ellipse>
<ellipse cx="505.8" cy="418.5" rx="2.8" ry="3.5" fill="#30c0d0"></ellipse>
<ellipse cx="565.5" cy="433.8" rx="5.9" ry="7.3" fill="#506050"></ellipse>
<ellipse cx="576.6" cy="445.4" rx="5.4" ry="6.7" fill="#e070d0"></ellipse>
<ellipse cx="587.7" cy="443.2" rx="6.2" ry="7.7" fill="#f04030"></ellipse>
<ellipse cx="620.9" cy="443.7" rx="6.2" ry="7.7" fill="#a04080"></ellipse>
<ellipse cx="631.7" cy="447.5" rx="4.7" ry="5.9" fill="#a0c050"></ellipse>
<ellipse cx="565.2" cy="456" rx="5.0" ry="6.2" fill="#a0c020"></ellipse>
<ellipse cx="576.6" cy="465.4" rx="6.2" ry="7.7" fill="#5040a0"></ellipse>
<ellipse cx="581.4" cy="456" rx="2.8" ry="3.5" fill="#40907a"></ellipse>
<ellipse cx="597.6" cy="463.3" rx="5.9" ry="7.3" fill="#a0a080"></ellipse>
<ellipse cx="611.5" cy="472.7" rx="3.7" ry="4.6" fill="#5060f0"></ellipse>
<ellipse cx="639.2" cy="483.6" rx="4.5" ry="5.6" fill="#40a0a0"></ellipse>
<ellipse cx="490.1" cy="448.8" rx="4.2" ry="5.2" fill="#f04060"></ellipse>
<ellipse cx="504.1" cy="462" rx="4.5" ry="5.6" fill="#5030a0"></ellipse>
<ellipse cx="528.3" cy="461.1" rx="3.3" ry="4.1" fill="#905060"></ellipse>
<ellipse cx="482.8" cy="461.1" rx="2.0" ry="2.4" fill="#c0c0e0"></ellipse>
<ellipse cx="541.3" cy="487.9" rx="5.5" ry="6.8" fill="#8040c0"></ellipse>
<ellipse cx="513.1" cy="491.3" rx="5.5" ry="6.8" fill="#806080"></ellipse>
<ellipse cx="490.8" cy="502.9" rx="6.7" ry="8.3" fill="#e070d0"></ellipse>
<ellipse cx="581.4" cy="497.4" rx="4.2" ry="5.2" fill="#30c0f0"></ellipse>
<ellipse cx="601" cy="489.3" rx="4.2" ry="5.2" fill="#60a040"></ellipse>
<ellipse cx="572.8" cy="507.5" rx="2.5" ry="3.2" fill="#c0c0c0"></ellipse>
<ellipse cx="581.7" cy="489.8" rx="1.7" ry="2.1" fill="#a040a0"></ellipse>
<ellipse cx="532.2" cy="495.6" rx="1.7" ry="2.1" fill="#607050"></ellipse>
</svg>
<div class="a" style="left:287px;top:517px;width:378px;height:50px;background:#000"></div>
<div class="a" style="left:287px;top:567px;width:378px;height:78px;background:#2c2c2c"></div>
<div class="f" style="left: 299px; top: 582px; font: bold 33px &quot;Liberation Sans&quot;; color: rgb(242, 242, 242); transform: scaleX(0.770085);">00:25</div>
<div class="f" style="left: 317px; top: 619px; font: bold 14px &quot;Liberation Sans&quot;; color: rgb(133, 133, 133); transform: scaleX(0.809773);">00:32</div>
<div class="f" style="left: 376px; top: 591px; font: bold 12px &quot;Liberation Sans&quot;; color: rgb(236, 236, 236); transform: scaleX(0.804954);">127.0.0.1:6969</div>
<div class="f" style="left: 376px; top: 618px; font: 9px &quot;Liberation Sans&quot;; color: rgb(110, 110, 110); transform: scaleX(0.648101);">MP2</div>
<div class="f" style="left: 401px; top: 618px; font: 9px &quot;Liberation Sans&quot;; color: rgb(110, 110, 110); transform: scaleX(0.734619);">384kbps</div>
<div class="f" style="left: 440px; top: 618px; font: 9px &quot;Liberation Sans&quot;; color: rgb(110, 110, 110); transform: scaleX(0.707412);">48khz</div>
<svg class="a" style="left:494px;top:581px" width="164" height="32" viewBox="0 0 164 32">
<defs><pattern id="seg" width="3.07" height="2.2" patternUnits="userSpaceOnUse"><rect width="3.07" height="2.2" fill="#2a2a2a"></rect><rect x="0" y="0" width="2.4" height="1.5" fill="#303030"></rect></pattern><pattern id="segb" width="3.07" height="2.2" patternUnits="userSpaceOnUse"><rect width="3.07" height="2.2" fill="#1f3a66"></rect><rect x="0" y="0" width="2.4" height="1.5" fill="#3a6ec4"></rect></pattern></defs>
<rect x="0" y="0" width="163" height="1" fill="#3a3a3a"></rect>
<rect x="0" y="2" width="163" height="28" fill="url(#seg)"></rect>
<rect x="0.00" y="11" width="3.07" height="19" fill="url(#segb)"></rect>
<rect x="3.07" y="2" width="3.07" height="28" fill="url(#segb)"></rect>
<rect x="3.07" y="1" width="2.4" height="1" fill="#9ab4dc"></rect>
<rect x="6.14" y="2" width="3.07" height="28" fill="url(#segb)"></rect>
<rect x="6.14" y="1" width="2.4" height="1" fill="#9ab4dc"></rect>
<rect x="9.21" y="16" width="3.07" height="14" fill="url(#segb)"></rect>
<rect x="12.28" y="16" width="3.07" height="14" fill="url(#segb)"></rect>
<rect x="12.28" y="1" width="2.4" height="1" fill="#9ab4dc"></rect>
<rect x="15.35" y="18" width="3.07" height="12" fill="url(#segb)"></rect>
<rect x="18.42" y="26" width="3.07" height="4" fill="url(#segb)"></rect>
<rect x="21.49" y="19" width="3.07" height="11" fill="url(#segb)"></rect>
<rect x="21.49" y="14" width="2.4" height="1" fill="#9ab4dc"></rect>
<rect x="24.56" y="25" width="3.07" height="5" fill="url(#segb)"></rect>
<rect x="27.63" y="23" width="3.07" height="7" fill="url(#segb)"></rect>
<rect x="30.70" y="24" width="3.07" height="6" fill="url(#segb)"></rect>
<rect x="30.70" y="12" width="2.4" height="1" fill="#9ab4dc"></rect>
<rect x="33.77" y="22" width="3.07" height="8" fill="url(#segb)"></rect>
<rect x="36.84" y="23" width="3.07" height="7" fill="url(#segb)"></rect>
<rect x="39.91" y="24" width="3.07" height="6" fill="url(#segb)"></rect>
<rect x="42.98" y="22" width="3.07" height="8" fill="url(#segb)"></rect>
<rect x="42.98" y="16" width="2.4" height="1" fill="#9ab4dc"></rect>
<rect x="46.05" y="25" width="3.07" height="5" fill="url(#segb)"></rect>
<rect x="49.12" y="21" width="3.07" height="9" fill="url(#segb)"></rect>
<rect x="49.12" y="16" width="2.4" height="1" fill="#9ab4dc"></rect>
<rect x="52.19" y="24" width="3.07" height="6" fill="url(#segb)"></rect>
<rect x="55.26" y="26" width="3.07" height="4" fill="url(#segb)"></rect>
<rect x="58.33" y="21" width="3.07" height="9" fill="url(#segb)"></rect>
<rect x="61.40" y="25" width="3.07" height="5" fill="url(#segb)"></rect>
<rect x="61.40" y="17" width="2.4" height="1" fill="#9ab4dc"></rect>
<rect x="64.47" y="25" width="3.07" height="5" fill="url(#segb)"></rect>
<rect x="67.54" y="25" width="3.07" height="5" fill="url(#segb)"></rect>
<rect x="70.61" y="24" width="3.07" height="6" fill="url(#segb)"></rect>
<rect x="73.68" y="23" width="3.07" height="7" fill="url(#segb)"></rect>
<rect x="76.75" y="26" width="3.07" height="4" fill="url(#segb)"></rect>
<rect x="79.82" y="25" width="3.07" height="5" fill="url(#segb)"></rect>
<rect x="79.82" y="19" width="2.4" height="1" fill="#9ab4dc"></rect>
<rect x="82.89" y="27" width="3.07" height="3" fill="url(#segb)"></rect>
<rect x="85.96" y="26" width="3.07" height="4" fill="url(#segb)"></rect>
<rect x="89.03" y="25" width="3.07" height="5" fill="url(#segb)"></rect>
<rect x="92.10" y="26" width="3.07" height="4" fill="url(#segb)"></rect>
<rect x="95.17" y="27" width="3.07" height="3" fill="url(#segb)"></rect>
<rect x="95.17" y="19" width="2.4" height="1" fill="#9ab4dc"></rect>
<rect x="98.24" y="27" width="3.07" height="3" fill="url(#segb)"></rect>
<rect x="101.31" y="26" width="3.07" height="4" fill="url(#segb)"></rect>
<rect x="104.38" y="27" width="3.07" height="3" fill="url(#segb)"></rect>
<rect x="107.45" y="26" width="3.07" height="4" fill="url(#segb)"></rect>
<rect x="110.52" y="25" width="3.07" height="5" fill="url(#segb)"></rect>
<rect x="110.52" y="18" width="2.4" height="1" fill="#9ab4dc"></rect>
<rect x="113.59" y="27" width="3.07" height="3" fill="url(#segb)"></rect>
<rect x="116.66" y="26" width="3.07" height="4" fill="url(#segb)"></rect>
<rect x="119.73" y="27" width="3.07" height="3" fill="url(#segb)"></rect>
<rect x="122.80" y="26" width="3.07" height="4" fill="url(#segb)"></rect>
<rect x="122.80" y="18" width="2.4" height="1" fill="#9ab4dc"></rect>
<rect x="125.87" y="26" width="3.07" height="4" fill="url(#segb)"></rect>
<rect x="128.94" y="27" width="3.07" height="3" fill="url(#segb)"></rect>
<rect x="132.01" y="26" width="3.07" height="4" fill="url(#segb)"></rect>
<rect x="135.08" y="25" width="3.07" height="5" fill="url(#segb)"></rect>
<rect x="135.08" y="19" width="2.4" height="1" fill="#9ab4dc"></rect>
<rect x="138.15" y="26" width="3.07" height="4" fill="url(#segb)"></rect>
<rect x="141.22" y="27" width="3.07" height="3" fill="url(#segb)"></rect>
<rect x="144.29" y="26" width="3.07" height="4" fill="url(#segb)"></rect>
<rect x="147.36" y="26" width="3.07" height="4" fill="url(#segb)"></rect>
<rect x="147.36" y="20" width="2.4" height="1" fill="#9ab4dc"></rect>
<rect x="150.43" y="25" width="3.07" height="5" fill="url(#segb)"></rect>
<rect x="153.50" y="26" width="3.07" height="4" fill="url(#segb)"></rect>
<rect x="156.57" y="27" width="3.07" height="3" fill="url(#segb)"></rect>
<rect x="156.57" y="19" width="2.4" height="1" fill="#9ab4dc"></rect>
<rect x="159.64" y="26" width="3.07" height="4" fill="url(#segb)"></rect>
</svg>
<div class="a" style="left:590px;top:619px;width:11px;height:12px;background:#1a1a1a;color:#aaa;font:bold 8px 'Liberation Sans';text-align:center;line-height:12px">A</div>
<div class="a" style="left:604px;top:620px;font-size:8px;color:#555">⇅</div>
<div class="a" style="left:614px;top:619px;width:11px;height:12px;background:#1a1a1a;color:#aaa;font:bold 8px 'Liberation Sans';text-align:center;line-height:12px">B</div>
<div class="a" style="left:634px;top:619px;width:11px;height:12px;background:#1a1a1a"></div>
<svg class="a" style="left:635px;top:621px" width="9" height="9" viewBox="0 0 9 9"><path d="M1 7 V1 H8 V7 M3 5 L4.5 8 L6 5" stroke="#999" fill="none"></path></svg>
<div class="a" style="left:648px;top:619px;width:11px;height:12px;background:#1a1a1a"></div>
<svg class="a" style="left:649px;top:621px" width="9" height="9" viewBox="0 0 9 9"><path d="M1 1.5 L8 7.5 M1 7.5 L8 1.5" stroke="#999" stroke-width="1.2"></path></svg>
<div class="a" style="left:287px;top:645px;width:378px;height:22px;background:#1b1b1b"></div>
<div class="a" style="left:292px;top:655px;width:221px;height:2.5px;background:#d2be1e"></div>
<div class="a" style="left:513px;top:656px;width:69px;height:2px;background:#050505"></div>
<div class="a" style="left:508.5px;top:652px;width:9px;height:9.5px;border-radius:50%;background:#f0f0f0"></div>
<svg class="a" style="left:590px;top:650px" width="12" height="12" viewBox="0 0 12 12"><path d="M1 4 H3 L7 1 V11 L3 8 H1 Z" fill="#777"></path><path d="M9 3 V9" stroke="#666"></path></svg>
<div class="a" style="left:603px;top:655px;width:49px;height:2.5px;background:#d2be1e"></div>
<div class="a" style="left:647.5px;top:652px;width:9px;height:9.5px;border-radius:50%;background:#f0f0f0"></div>
<div class="a" style="left:287px;top:667px;width:378px;height:41px;background:#1f1f1f;border-top:1px solid #111"></div>
<div class="a" style="left:318px;top:667px;width:1px;height:41px;background:#141414"></div>
<div class="a" style="left:349px;top:667px;width:1px;height:41px;background:#141414"></div>
<div class="a" style="left:380px;top:667px;width:1px;height:41px;background:#141414"></div>
<div class="a" style="left:412px;top:667px;width:1px;height:41px;background:#141414"></div>
<div class="a" style="left:443px;top:667px;width:1px;height:41px;background:#141414"></div>
<div class="a" style="left:633px;top:667px;width:1px;height:41px;background:#141414"></div>
<div class="a" style="left:299px;top:682px;width:3px;height:11px;background:#eee"></div>
<div class="a" style="left:304px;top:682px;width:3px;height:11px;background:#eee"></div>
<div class="a" style="left:330px;top:683px;width:8px;height:9px;background:#e8e8e8"></div>
<svg class="a" style="left:360px;top:682px" width="10" height="11" viewBox="0 0 10 11"><path d="M1 0 H3 V11 H1 Z M9 0 V11 L3 5.5 Z" fill="#eee"></path></svg>
<svg class="a" style="left:391px;top:682px" width="10" height="11" viewBox="0 0 10 11"><path d="M7 0 H9 V11 H7 Z M1 0 V11 L7 5.5 Z" fill="#eee"></path></svg>
<svg class="a" style="left:422px;top:682px" width="11" height="11" viewBox="0 0 11 11"><path d="M5.5 0.5 L10.5 6 H0.5 Z M0.5 8 H10.5 V10.5 H0.5 Z" fill="#eee"></path></svg>
<div class="f" style="left: 452px; top: 683px; font: bold 10px &quot;Liberation Sans&quot;; color: rgb(224, 224, 224); transform: scaleX(0.799375);">00:00:25</div>
<div class="a" style="left:487px;top:682px;font-size:11px;color:#555">/</div>
<div class="f" style="left: 495px; top: 683px; font: 10px &quot;Liberation Sans&quot;; color: rgb(119, 119, 119); transform: scaleX(0.82183);">00:00:32</div>
<svg class="a" style="left:561px;top:680px" width="16" height="16" viewBox="0 0 16 16"><path d="M1 2 H7 M1 5 H3 M1 8 H3 M1 11 H3" stroke="#e0d020" stroke-width="1.4"></path><circle cx="9" cy="8.5" r="3.6" stroke="#e0d020" stroke-width="2" fill="none"></circle><path d="M11.5 11 L14.5 14.5" stroke="#e0d020" stroke-width="2.2"></path></svg>
<div class="a" style="left:587px;top:681px;width:11px;height:14px;background:#777;border-radius:1px"></div>
<div class="a" style="left:589.5px;top:684.5px;width:6px;height:1px;background:#3a3a3a;box-shadow:0 3px 0 #3a3a3a,0 6px 0 #3a3a3a"></div>
<svg class="a" style="left:609px;top:680px" width="16" height="16" viewBox="0 0 16 16"><polygon points="8.00,1.00 9.76,3.75 12.95,3.05 12.25,6.24 15.00,8.00 12.25,9.76 12.95,12.95 9.76,12.25 8.00,15.00 6.24,12.25 3.05,12.95 3.75,9.76 1.00,8.00 3.75,6.24 3.05,3.05 6.24,3.75" fill="#7c7c7c"></polygon><circle cx="8" cy="8" r="2" fill="#1f1f1f"></circle></svg>
<div class="a" style="left:645px;top:684px;width:10px;height:1px;background:#e8e8e8;box-shadow:0 4px 0 #e8e8e8,0 8px 0 #e8e8e8"></div>

<!-- overlay text -->
<div class="f" style="left: 393px; top: 71px; font-size: 16px; color: rgb(17, 17, 17); -webkit-text-stroke: 0.35px rgb(17, 17, 17); transform: scaleX(0.892095);">Eutelsat 16A at 16.0°E</div>
<div class="f" style="left: 397px; top: 94px; font-size: 16px; color: rgb(17, 17, 17); -webkit-text-stroke: 0.35px rgb(17, 17, 17); transform: scaleX(0.882165);">PF 370_Lučenec/Slovakia</div>
<div class="f" style="left: 405px; top: 117px; font-size: 16px; color: rgb(17, 17, 17); -webkit-text-stroke: 0.35px rgb(17, 17, 17); transform: scaleX(0.930687);">f=12566,990 MHz_H</div>
<div class="f" style="left: 393px; top: 140px; font-size: 16px; color: rgb(17, 17, 17); -webkit-text-stroke: 0.35px rgb(17, 17, 17); transform: scaleX(0.92921);">Locked Uptime : t=60 min</div>
<!-- logo -->
<div class="a" style="left:573px;top:89px;width:54px;height:52px;background:#fcfcfe"></div>
<svg class="a" style="left:573px;top:89px" width="54" height="52" viewBox="0 0 54 52">
<path d="M10.2 44 A23.45 23.45 0 0 1 40 8.5" fill="none" stroke="#23238a" stroke-width="1.5"></path>
<path d="M43 11 A23.45 23.45 0 0 1 50 29" fill="none" stroke="#23238a" stroke-width="1.5"></path>
<path d="M49.8 33 A23.45 23.45 0 0 1 44.5 44" fill="none" stroke="#23238a" stroke-width="1.5"></path>
<path d="M8 44 H46" stroke="#23238a" stroke-width="1.3"></path>
<path d="M39 17 q4 5 3 12 M42 14 q5 6 3.5 15 M45 12 q5 8 3.5 17" stroke="#c81818" stroke-width="1.5" fill="none"></path>
<path d="M18 8.5 L31.5 41 M20 8 L28 26 M18 8.5 Q17 20 22 30" stroke="#6a70a8" stroke-width="0.9" fill="none"></path>
<path d="M27 26 L37 24.5 L34 28" stroke="#8a90b8" stroke-width="1" fill="none"></path>
<circle cx="15" cy="34.5" r="3" fill="none" stroke="#6a70a8" stroke-width="1"></circle>
<path d="M22 30 L16 36 L10 44 M22 30 L27 44" stroke="#6a70a8" stroke-width="1" fill="none"></path>
<text x="27" y="51" font-size="8" font-weight="bold" stroke-width="0.3" stroke="#23237a" font-family="Liberation Sans" text-anchor="middle" textLength="50" lengthAdjust="spacingAndGlyphs"><tspan fill="#c02828">DX</tspan><tspan fill="#23237a">SATCS.COM</tspan></text>
</svg>

<!-- browser window -->
<div class="a" style="left:688px;top:120px;width:331px;height:593px;background:#3c3c3c;border:2px solid #050505"></div>
<div class="a" style="left:690px;top:122px;width:327px;height:30px;background:#1b1b1b"></div>
<div class="f" style="left: 696px; top: 131px; font: 10px &quot;Liberation Sans&quot;; color: rgb(224, 224, 224); transform: scaleX(0.817717);">Browser</div>
<div class="a" style="left:934px;top:135px;width:30px;height:2px;background:#d8c830"></div>
<div class="a" style="left:962px;top:133px;width:9px;height:6px;background:#eee;border-radius:1px"></div>
<svg class="a" style="left:982px;top:130px" width="11" height="11" viewBox="0 0 11 11"><path d="M0 5.5 H4 M4 2 V9 M4 3 H9 V8 H4" stroke="#777" stroke-width="1.3" fill="#777"></path></svg>
<svg class="a" style="left:1001px;top:131px" width="9" height="9" viewBox="0 0 9 9"><path d="M0.5 0.5 L8.5 8.5 M8.5 0.5 L0.5 8.5" stroke="#999" stroke-width="1"></path></svg>
<div class="a" style="left:690px;top:152px;width:327px;height:35px;background:#262626"></div>
<div class="a" style="left:691px;top:155px;width:55px;height:29px;background:#333"></div>
<div class="a" style="left:747px;top:154px;width:83px;height:33px;background:#3c3c3c"></div>
<div class="a" style="left:832px;top:155px;width:116px;height:29px;background:#333"></div>
<div class="a" style="left:950px;top:155px;width:67px;height:29px;background:#333"></div>
<div class="f" style="left: 697px; top: 163px; font: 12px &quot;Liberation Sans&quot;; color: rgb(133, 133, 133); transform: scaleX(0.786885);">Navigovat</div>
<div class="f" style="left: 753px; top: 163px; font: 12px &quot;Liberation Sans&quot;; color: rgb(230, 230, 230); transform: scaleX(0.744308);">Prohlížeč nabídky</div>
<div class="f" style="left: 838px; top: 163px; font: 12px &quot;Liberation Sans&quot;; color: rgb(133, 133, 133); transform: scaleX(0.768059);">Nástroj procházení titulků</div>
<div class="f" style="left: 952px; top: 163px; font: 12px &quot;Liberation Sans&quot;; color: rgb(133, 133, 133); transform: scaleX(0.778378);">Online</div>
<div class="a" style="left:984px;top:160px;width:14px;height:18px;background:#555"></div>
<div class="a" style="left:999px;top:160px;width:14px;height:18px;background:#555"></div>
<svg class="a" style="left:984px;top:160px" width="30" height="18" viewBox="0 0 30 18"><path d="M5 5 L9 9 L5 13" stroke="#bbb" stroke-width="1.6" fill="none"></path><path d="M18 7 L21.5 10.5 L25 7" stroke="#bbb" stroke-width="1.6" fill="none"></path></svg>
<div class="a" style="left:690px;top:184px;width:327px;height:3px;background:#222"></div>
<div class="a" style="left:690px;top:187px;width:327px;height:22px;background:#343434"></div>
<svg class="a" style="left:695px;top:193px" width="11" height="10" viewBox="0 0 11 10"><path d="M0 1 H4 L5 2 H10 V9 H0 Z" fill="#f0c840"></path></svg>
<div class="a" style="left:711px;top:194px;font:9px 'Liberation Sans';color:#ccc">..</div>
<div class="a" style="left:697px;top:215px;width:6px;height:7px;border-radius:50%;background:#3a6ed8"></div>
<div class="f" style="left: 711px; top: 213px; font: 12px &quot;Liberation Sans&quot;; color: rgb(184, 184, 184); transform: scaleX(0.730029);">Audio #1 - Dutch, MPEG Audio, 48.0 kHz, 2 Ch, 384 kbit/s (PID:0x006f, PE...</div>

<!-- right panel -->
<div class="a" style="left:1054px;top:93px;width:139px;height:639px;border:1px solid #dcdcdc;border-radius:2px"></div>
<div class="f" style="left: 1058px; top: 87px; font-size: 11px; color: rgb(51, 51, 156); background: rgb(240, 240, 240); padding: 0px 2px; -webkit-text-stroke: 0.3px rgb(51, 51, 156); transform: scaleX(0.74479);">Transponder (AU) [BS]</div>
<div class="f lab" style="left: 1060px; top: 115px; transform: scaleX(0.763203);">Frequency:</div>
<div class="f val" style="left: 1121px; top: 115px; transform: scaleX(0.77248);">12566,989 MHz</div>
<div class="f lab" style="left: 1060px; top: 147.7px; transform: scaleX(0.80929);">Polarization:</div>
<div class="f val" style="left: 1121px; top: 147.7px; transform: scaleX(0.773504);">Horizontal</div>
<div class="f lab" style="left: 1060px; top: 180.3px; transform: scaleX(0.764789);">Symbol Rate:</div>
<div class="f val" style="left: 1121px; top: 180.3px; transform: scaleX(0.743149);">405,136 KS/s</div>
<div class="f lab" style="left: 1060px; top: 213px; transform: scaleX(0.796594);">Standard:</div>
<div class="f val" style="left: 1121px; top: 213px; transform: scaleX(0.718823);">DVB-S2</div>
<div class="f lab" style="left: 1060px; top: 245.7px; transform: scaleX(0.852747);">Modulation:</div>
<div class="f val" style="left: 1121px; top: 245.7px; transform: scaleX(0.703979);">QPSK-S2</div>
<div class="f lab" style="left: 1060px; top: 278.4px; transform: scaleX(0.678304);">FEC:</div>
<div class="f val" style="left: 1121px; top: 278.4px; transform: scaleX(0.81716);">3/5</div>
<div class="f lab" style="left: 1060px; top: 311px; transform: scaleX(0.835974);">RollOff:</div>
<div class="f val" style="left: 1121px; top: 311px; transform: scaleX(0.770241);">0.20</div>
<div class="f lab" style="left: 1060px; top: 343.7px; transform: scaleX(0.817369);">Pilot:</div>
<div class="f val" style="left: 1121px; top: 343.7px; transform: scaleX(0.757576);">ON</div>
<div class="f lab" style="left: 1060px; top: 376.4px; transform: scaleX(0.777812);">Spectrum:</div>
<div class="f val" style="left: 1121px; top: 376.4px; transform: scaleX(0.771084);">Inverted</div>
<div class="f lab" style="left: 1060px; top: 409px; transform: scaleX(0.747398);">Frame Type:</div>
<div class="f val" style="left: 1121px; top: 409px; transform: scaleX(0.757707);">Long Frame</div>
<div class="f lab" style="left: 1060px; top: 441.7px; transform: scaleX(0.800834);">Code Mode:</div>
<div class="f val" style="left: 1121px; top: 441.7px; transform: scaleX(0.758105);">CCM</div>
<div class="f lab" style="left: 1060px; top: 474.4px; transform: scaleX(0.769732);">Stream type:</div>
<div class="f val" style="left: 1121px; top: 474.4px; transform: scaleX(0.741115);">Transport</div>
<div class="f lab" style="left: 1060px; top: 507px; transform: scaleX(0.604444);">ISSYI</div>
<div class="f val" style="left: 1121px; top: 507px; transform: scaleX(0.709091);">OFF</div>
<div class="f lab" style="left: 1060px; top: 539.7px; transform: scaleX(0.741974);">NPD:</div>
<div class="f val" style="left: 1121px; top: 539.7px; transform: scaleX(0.709091);">OFF</div>
<div class="f lab" style="left: 1060px; top: 572.4px; transform: scaleX(0.711583);">RF Level:</div>
<div class="f val" style="left: 1121px; top: 572.4px; transform: scaleX(0.760259);">-39 dBm</div>
<div class="f lab" style="left: 1060px; top: 605px; transform: scaleX(0.740918);">BitRate:</div>
<div class="f val" style="left: 1121px; top: 605px; transform: scaleX(0.801804);">0,461 Mbit/s</div>
<div class="f lab" style="left: 1060px; top: 637.7px; transform: scaleX(0.802508);">CarrierWidth:</div>
<div class="f val" style="left: 1121px; top: 637.7px; transform: scaleX(0.789427);">0,486 MHz</div>
<div class="f lab" style="left: 1060px; top: 687.5px; transform: scaleX(0.715655);">MIS (0):</div>
<div class="a" style="left:1121px;top:684px;width:56px;height:19px;background:#fafafa;border-radius:2px"></div>
<div class="f lab" style="left: 1124px; top: 688px; color: rgb(128, 128, 128); -webkit-text-stroke: 0px; transform: scaleX(0.784875);">Single</div>
<svg class="a" style="left:1164px;top:691px" width="8" height="5" viewBox="0 0 8 5"><path d="M0.5 0.5 L4 4 L7.5 0.5" stroke="#999" fill="none"></path></svg>
<div class="a" style="left:1054px;top:740px;width:138px;height:26px;background:#fdfdfd;border:2px solid #4a8ad8;border-radius:4px"></div>
<svg class="a" style="left:1116px;top:745px" width="13" height="15" viewBox="0 0 13 15"><rect x="0.5" y="0.5" width="12" height="14" fill="#f0f0f0" stroke="#a0a0a0"></rect><rect x="1" y="4" width="11" height="2.5" fill="#5a8ed8"></rect><path d="M1 9.5 H12 M1 12 H12" stroke="#b0b0b0"></path></svg>

<!-- status bars -->
<div class="sb" style="left:10px;width:201px;background:#8ee88e"></div>
<div class="sb" style="left:216px;width:202px;background:#8ee88e"></div>
<div class="sb" style="left:422px;width:202px;background:#f9a07a"></div>
<div class="sb" style="left:629px;width:202px;background:#f9a07a"></div>
<div class="sb" style="left:836px;width:204px;background:#ee8282"></div>
<div class="f sbt" style="left: 99px; top: 750px; transform: scaleX(0.775145);">PAT (1)</div>
<div class="f sbt" style="left: 304px; top: 750px; transform: scaleX(0.738462);">PMT (1)</div>
<div class="f sbt" style="left: 498px; top: 750px; transform: scaleX(0.757396);">SDT (0) timeout!</div>
<div class="f sbt" style="left: 705px; top: 750px; transform: scaleX(0.765001);">CAT (0) timeout!</div>
<div class="f sbt" style="left: 927px; top: 750px; transform: scaleX(0.75);">NIT (0)</div>

<!-- progress bars -->
<div class="pb" style="left:6px;top:776px;width:96px"><i class="g" style="left:0;width:96px"></i></div>
<div class="pb" style="left:6px;top:800px;width:96px"><i class="g" style="left:0;width:96px"></i></div>
<div class="pb" style="left:106px;top:776px;width:490px"><i class="r" style="left:0;width:48px"></i><i class="y" style="left:48px;width:197px"></i><i class="g" style="left:245px;width:45px"></i><i class="gr" style="left:290px;width:200px"></i></div>
<div class="pb" style="left:106px;top:800px;width:490px"><i class="r" style="left:0;width:48px"></i><i class="y" style="left:48px;width:197px"></i><i class="g" style="left:245px;width:245px"></i></div>
<div class="pb" style="left:599px;top:776px;width:245px"><i class="r" style="left:0;width:54px"></i><i class="y" style="left:54px;width:87px"></i><i class="g" style="left:141px;width:104px"></i></div>
<div class="pb" style="left:847px;top:776px;width:244px"><i class="r" style="left:0;width:53px"></i><i class="y" style="left:53px;width:86px"></i><i class="g" style="left:139px;width:105px"></i></div>
<div class="pb" style="left:599px;top:800px;width:492px"><i class="r" style="left:0;width:54px"></i><i class="y" style="left:54px;width:125px"></i><i class="g" style="left:179px;width:112px"></i><i class="gr" style="left:291px;width:201px"></i></div>
<div class="pb" style="left:1093px;top:776px;width:98px"><i class="g" style="left:0;width:98px"></i></div>
<div class="pb" style="left:1093px;top:800px;width:98px"><i class="g" style="left:0;width:98px"></i></div>
<div class="f pbt" style="left: 8px; top: 781px; transform: scaleX(0.76473);">Present</div>
<div class="f pbt" style="left: 8px; top: 805px; transform: scaleX(0.774194);">Lock</div>
<div class="f pbt" style="left: 110px; top: 781px; transform: scaleX(0.753157);">Level: 59%</div>
<div class="f pbt" style="left: 110px; top: 805px; transform: scaleX(0.730094);">Quality: 100%</div>
<div class="f pbt" style="left: 602px; top: 781px; transform: scaleX(0.730812);">preBER: &lt;1.0E-7</div>
<div class="f pbt" style="left: 850px; top: 781px; transform: scaleX(0.710289);">BER: &lt;1.0E-7</div>
<div class="f pbt" style="left: 602px; top: 805px; transform: scaleX(0.770692);">SNR: 11,8 dB (Margin: 9,6 dB | Good)</div>
<div class="f pbt" style="left: 1096px; top: 781px; transform: scaleX(0.774791);">Input (~517 Kbps)</div>
<div class="f pbt" style="left: 1096px; top: 805px; transform: scaleX(0.725076);">Sync TS</div>

<!-- status bar -->
<div class="a" style="left:0;top:825px;width:1200px;height:1px;background:#dadada"></div>
<div class="a" style="left:391px;top:829px;width:1px;height:17px;background:#a0a0a0"></div>
<div class="a" style="left:790px;top:829px;width:1px;height:17px;background:#a0a0a0"></div>
<div class="a" style="left:1187px;top:829px;width:1px;height:17px;background:#a0a0a0"></div>
<div class="f" style="left: 141px; top: 832px; font-size: 12px; color: rgb(34, 34, 34); -webkit-text-stroke: 0.2px rgb(34, 34, 34); transform: scaleX(0.744422);">Locked -&gt; Uptime: 01:16:15</div>
<div class="f" style="left: 551px; top: 832px; font-size: 12px; color: rgb(34, 34, 34); -webkit-text-stroke: 0.2px rgb(34, 34, 34); transform: scaleX(0.699131);">SYNC 0 | TEI 0 | CC 0</div>
<div class="f" style="left: 909px; top: 832px; font-size: 12px; color: rgb(34, 34, 34); -webkit-text-stroke: 0.2px rgb(34, 34, 34); transform: scaleX(0.751836);">Best signal: 12,2 dB (2024-06-30 13:13)</div>
<svg class="a" style="left:1188px;top:834px" width="12" height="14" viewBox="0 0 12 14"><g fill="#999"><rect x="8" y="1" width="1.5" height="1.5"></rect><rect x="8" y="5" width="1.5" height="1.5"></rect><rect x="8" y="9" width="1.5" height="1.5"></rect><rect x="4" y="9" width="1.5" height="1.5"></rect><rect x="4" y="5" width="1.5" height="1.5"></rect><rect x="0" y="9" width="1.5" height="1.5"></rect></g></svg>

<div class="a" style="left:1199px;top:0;width:1px;height:850px;background:linear-gradient(#4a4a8a 0,#8e8e9e 12px,#8e8e9e 100%)"></div>




</body></html>
